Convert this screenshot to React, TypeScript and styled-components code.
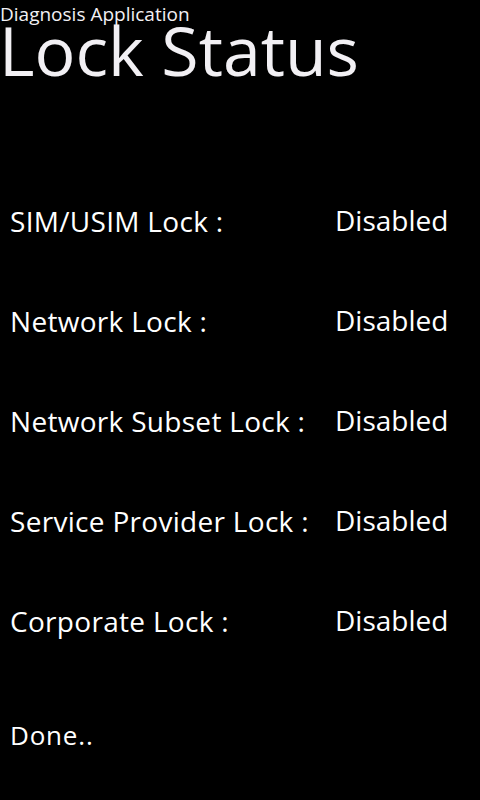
import React from "react";
import styled, {createGlobalStyle} from "styled-components";

const GlobalStyle = createGlobalStyle`
  html, body {
    margin: 0;
    padding: 0;
    background: #000;
  }
  body {
    font-family: "Open Sans", "Noto Sans", sans-serif;
    color: #fff;
  }
`;

const Page = styled.div`
  width: 480px;
  height: 800px;
  background: #000;
  overflow: hidden;
  display: flex;
  flex-direction: column;
`;

const Header = styled.div`
  display: flex;
  flex-direction: column;
`;

const AppName = styled.div`
  font-size: 19px;
  line-height: 26px;
  height: 23px;
  margin-top: 1px;
  white-space: nowrap;
  color: #f2f0f4;
`;

const PageTitle = styled.div`
  font-size: 68px;
  line-height: 68px;
  margin-top: -8px;
  margin-left: -1px;
  white-space: nowrap;
  color: #f2f0f4;
`;

const StatusList = styled.div`
  display: grid;
  grid-auto-rows: 100px;
  margin-top: 122px;
  padding-left: 10px;
`;

const StatusRow = styled.div`
  display: grid;
  grid-template-columns: 325px auto;
  font-size: 28px;
  line-height: 30px;
`;

const Label = styled.span`
  white-space: nowrap;
  letter-spacing: 0.3px;
`;

const Value = styled.span`
  margin-top: -1px;
`;

const Footer = styled.div`
  padding-left: 10px;
  margin-top: 14px;
  font-size: 26px;
  line-height: 30px;
  letter-spacing: 0.8px;
`;

const locks = [
    "SIM/USIM Lock :",
    "Network Lock :",
    "Network Subset Lock :",
    "Service Provider Lock :",
    "Corporate Lock :",
];

export default function App() {
    return (
        <Page>
            <GlobalStyle/>
            <Header>
                <AppName>Diagnosis Application</AppName>
                <PageTitle>Lock Status</PageTitle>
            </Header>
            <StatusList>
                {locks.map(l => (
                    <StatusRow key={l}>
                        <Label>{l}</Label>
                        <Value>Disabled</Value>
                    </StatusRow>
                ))}
            </StatusList>
            <Footer>Done..</Footer>
        </Page>
    );
}
